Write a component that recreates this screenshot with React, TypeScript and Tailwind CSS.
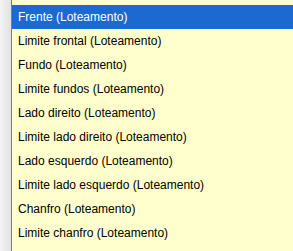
const items = [
  "Frente (Loteamento)",
  "Limite frontal (Loteamento)",
  "Fundo (Loteamento)",
  "Limite fundos (Loteamento)",
  "Lado direito (Loteamento)",
  "Limite lado direito (Loteamento)",
  "Lado esquerdo (Loteamento)",
  "Limite lado esquerdo (Loteamento)",
  "Chanfro (Loteamento)",
  "Limite chanfro (Loteamento)",
];

export default function App() {
  return (
    <div className="flex w-[293px] h-[251px] overflow-hidden font-['Liberation_Sans',Arial,sans-serif]">
      {/* left frame edge */}
      <div className="w-[12px] h-full bg-gradient-to-r from-[#f3f3f3] to-[#e2e2e2] border-r border-[#7c7c7c]" />
      {/* list */}
      <ul className="flex-1 bg-[#ffffcd] pt-[5px]">
        {items.map((item, i) => (
          <li
            key={item}
            className={
              i === 0
                ? "h-[24px] flex items-center pl-[6px] text-[12px] text-white bg-[#1c69d2]"
                : "h-[24px] flex items-center pl-[6px] text-[12px] text-black"
            }
          >
            {item}
          </li>
        ))}
      </ul>
    </div>
  );
}
